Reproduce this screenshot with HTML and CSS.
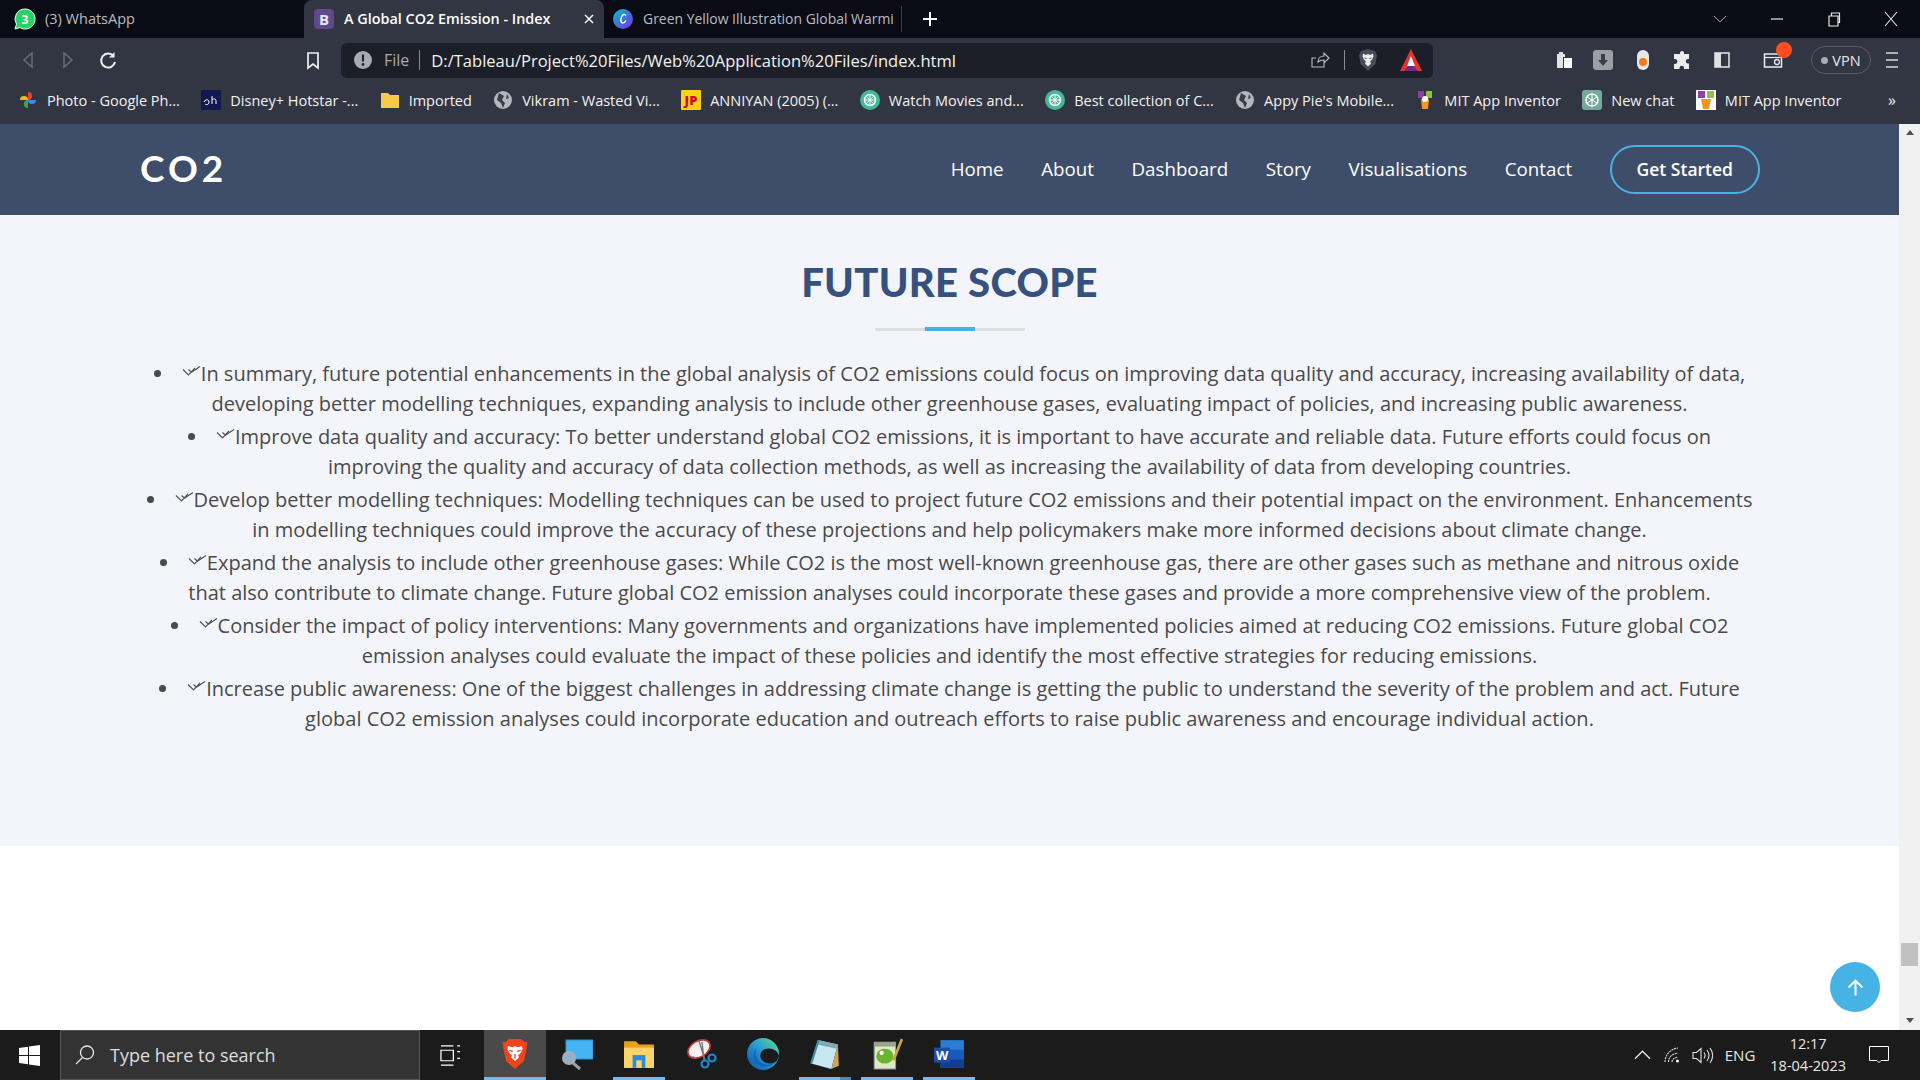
FILE: index.html
```html
<!DOCTYPE html>
<html lang="en">
<head>
<meta charset="utf-8">
<title>A Global CO2 Emission - Index</title>
<link rel="stylesheet" href="styles.css">
</head>
<body>
<div class="tabstrip">
  <div class="tab tab-one">
    <svg class="ticon ticon-wa" viewBox="0 0 22 22"><path d="M11 1a10 10 0 0 0-8.500 15.200L1 21l5-1.400A10 10 0 1 0 11 1z" fill="#25d366" stroke="#eafff2" stroke-width="1"/><text x="11" y="15.500" class="badge-num">3</text></svg>
    <span class="tab-label dim">(3) WhatsApp</span>
  </div>
  <div class="tab tab-active">
    <svg class="ticon" viewBox="0 0 20 20"><rect width="20" height="20" rx="4" fill="#5f4b8b"/><text x="10" y="15.500" class="b-letter">B</text></svg>
    <span class="tab-label strong">A Global CO2 Emission - Index</span>
    <svg class="tab-x" viewBox="0 0 12 12"><path d="M2 2l8 8M10 2l-8 8" stroke="#fff" stroke-width="1.500"/></svg>
  </div>
  <div class="tab tab-three">
    <svg class="ticon" viewBox="0 0 20 20"><defs><linearGradient id="canva" x1="0" y1="0" x2="1" y2="1"><stop offset="0" stop-color="#00c4cc"/><stop offset="1" stop-color="#7d2ae8"/></linearGradient></defs><circle cx="10" cy="10" r="10" fill="url(#canva)"/><path d="M13 6.500c-1-2-3.500-1-4.500 1.500s-1 6 1 6 3-1.500 3.500-2.500" fill="none" stroke="#fff" stroke-width="1.500"/></svg>
    <span class="tab-label dim tab-label-narrow">Green Yellow Illustration Global Warmi</span>
  </div>
  <svg class="plus" viewBox="0 0 16 16"><path d="M8 1v14M1 8h14" stroke="#fff" stroke-width="2"/></svg>
  <div class="win-controls">
    <svg class="win" viewBox="0 0 16 16"><path d="M2 5l6 6 6-6" fill="none" stroke="#9a9ca6" stroke-width="1"/></svg>
    <svg class="win" viewBox="0 0 16 16"><path d="M2 8h12" stroke="#e8e8e8" stroke-width="1.200"/></svg>
    <svg class="win" viewBox="0 0 16 16"><path d="M3 5h9v10H3zM5.500 5V2h8v9.500H12" fill="none" stroke="#e8e8e8" stroke-width="1.200"/></svg>
    <svg class="win" viewBox="0 0 16 16"><path d="M2 1l12 14M14 1L2 15" stroke="#e8e8e8" stroke-width="1.100"/></svg>
  </div>
</div>

<div class="toolbar">
  <div class="slot"><svg class="i20" viewBox="0 0 20 20"><path d="M14 3L6 10l8 7z" fill="none" stroke="#6a6d79" stroke-width="1.500"/></svg></div>
  <div class="slot"><svg class="i20" viewBox="0 0 20 20"><path d="M6 3l8 7-8 7z" fill="none" stroke="#6a6d79" stroke-width="1.500"/></svg></div>
  <div class="slot"><svg class="i20" viewBox="0 0 20 20"><path d="M15.500 6A7 7 0 1 0 17 12" fill="none" stroke="#f2f2f2" stroke-width="2"/><path d="M16.500 2v5.500H11z" fill="#f2f2f2"/></svg></div>
  <div class="slot slot-mark"><svg class="i20" viewBox="0 0 20 20"><path d="M5 3h10v15l-5-4-5 4z" fill="none" stroke="#f0f0f0" stroke-width="1.700"/></svg></div>
  <div class="address">
    <svg class="i20 addr-info" viewBox="0 0 20 20"><circle cx="10" cy="10" r="9" fill="#a9abb2"/><path d="M10 4.500v7" stroke="#22252e" stroke-width="2.200"/><circle cx="10" cy="14.500" r="1.400" fill="#22252e"/></svg>
    <span class="addr-file">File</span>
    <span class="addr-sep"></span>
    <span class="addr-url">D:/Tableau/Project%20Files/Web%20Application%20Files/index.html</span>
    <span class="addr-fill"></span>
    <svg class="i20" viewBox="0 0 20 20"><path d="M14 10v7H2V8h4M8 12c0-4 3-6 6-6V3l5 5-5 5v-3c-3 0-5 1-6 2z" fill="none" stroke="#b9bbc2" stroke-width="1.100"/></svg>
    <span class="addr-sep addr-sep2"></span>
    <svg class="i-brave" viewBox="0 0 20 24"><path d="M10 1l7 2 2 4-1.500 9L10 23 2.500 16 1 7l2-4z" fill="#4a4d58"/><path d="M10 6l2 1 3-1.500 .5 3-1.500 3-2 2 1 2-3 3-3-3 1-2-2-2-1.500-3 .5-3L8 7z" fill="#f1f1f1"/><path d="M6.500 10l2 .5M13.500 10l-2 .5" stroke="#4a4d58" stroke-width="1"/></svg>
    <svg class="i-bat" viewBox="0 0 24 24"><path d="M12 1L23 23H1z" fill="#e3342f"/><path d="M12 15l7 8H5z" fill="#662d91"/><path d="M12 8l4 10H8z" fill="#fff"/></svg>
  </div>
  <div class="tools">
    <div class="slot tool"><svg class="i20" viewBox="0 0 20 20"><path d="M3 4h2V2h4v2h2v3H9v11H3z" fill="#e4e4e4"/><path d="M10 8h8v10h-8z" fill="#fff"/></svg></div>
    <div class="slot tool"><svg class="i20" viewBox="0 0 20 20"><rect x="0" y="0" width="20" height="20" rx="3" fill="#9d9fa6"/><path d="M8 4h4v6h3l-5 6-5-6h3z" fill="#3d3f48"/></svg></div>
    <div class="slot tool"><svg class="i20" viewBox="0 0 20 20"><rect x="4" y="0" width="12" height="20" rx="6" fill="#e8e8e8"/><circle cx="10" cy="12" r="4" fill="#f47a1f"/></svg></div>
    <div class="slot tool"><svg class="i20" viewBox="0 0 20 20"><path d="M8 3a2 2 0 0 1 4 0v1h5v5h-1a2.200 2.200 0 0 0 0 4.500h1V19h-5v-1a2.200 2.200 0 0 0-4.500 0v1H2v-5h1a2.500 2.500 0 0 0 0-5H2V4h6z" fill="#ececec"/></svg></div>
    <div class="slot tool"><svg class="i20" viewBox="0 0 20 20"><rect x="3" y="3" width="14" height="14" fill="none" stroke="#e0e0e0" stroke-width="1.600"/><rect x="3" y="3" width="6" height="14" fill="#e0e0e0"/></svg></div>
    <div class="slot tool tool-wallet">
      <svg class="i20" viewBox="0 0 20 20"><path d="M1.500 4h17v13h-17z" fill="none" stroke="#ececec" stroke-width="1.500"/><path d="M1.500 7.500h17" stroke="#ececec" stroke-width="1.200"/><circle cx="14" cy="12" r="2.500" fill="none" stroke="#ececec" stroke-width="1.300"/></svg>
      <span class="dot-alert"></span>
    </div>
    <div class="vpn"><span class="vpn-dot"></span>VPN</div>
    <div class="slot menu"><svg class="i20" viewBox="0 0 20 20"><path d="M4 3h12M4 10h12M4 17h12" stroke="#d8d8d8" stroke-width="1.700"/></svg></div>
  </div>
</div>

<div class="bookmarks">
  <div class="bm"><svg class="bicon" viewBox="0 0 20 20"><path d="M10 10V2a4 4 0 0 1 0 8z" fill="#ea4335"/><path d="M10 10h8a4 4 0 0 1-8 0z" fill="#4285f4"/><path d="M10 10v8a4 4 0 0 1 0-8z" fill="#34a853"/><path d="M10 10H2a4 4 0 0 1 8 0z" fill="#fbbc04"/></svg><span>Photo - Google Ph...</span></div>
  <div class="bm"><svg class="bicon" viewBox="0 0 20 20"><rect width="20" height="20" fill="#10194d"/><path d="M3 12c1-3 5-3 5 0s-3 3-4 2M11 6v8M11 10c2-2 4-1 4 1v3" fill="none" stroke="#fff" stroke-width="1"/></svg><span>Disney+ Hotstar -...</span></div>
  <div class="bm"><svg class="bicon" viewBox="0 0 20 20"><path d="M1 3h7l2 2h9v13H1z" fill="#f7c948"/></svg><span>Imported</span></div>
  <div class="bm"><svg class="bicon" viewBox="0 0 20 20"><circle cx="10" cy="10" r="9" fill="#b4b6bc"/><path d="M6 3l5 3-2 4 3 3-2 5-2-5-4-3zM14 4l2 4-3 1z" fill="#3a3d49"/></svg><span>Vikram - Wasted Vi...</span></div>
  <div class="bm"><svg class="bicon" viewBox="0 0 20 20"><rect width="20" height="20" rx="1" fill="#fcd116"/><text x="10" y="15" class="jp">JP</text></svg><span>ANNIYAN (2005) (...</span></div>
  <div class="bm"><svg class="bicon" viewBox="0 0 20 20"><circle cx="10" cy="10" r="10" fill="#42b99a"/><circle cx="10" cy="10" r="5.500" fill="none" stroke="#fff" stroke-width="1.500"/><path d="M10 4v12M4 10h12M6 6l8 8M14 6l-8 8" stroke="#fff"/></svg><span>Watch Movies and...</span></div>
  <div class="bm"><svg class="bicon" viewBox="0 0 20 20"><circle cx="10" cy="10" r="10" fill="#42b99a"/><circle cx="10" cy="10" r="5.500" fill="none" stroke="#fff" stroke-width="1.500"/><path d="M10 4v12M4 10h12M6 6l8 8M14 6l-8 8" stroke="#fff"/></svg><span>Best collection of C...</span></div>
  <div class="bm"><svg class="bicon" viewBox="0 0 20 20"><circle cx="10" cy="10" r="9" fill="#b4b6bc"/><path d="M6 3l5 3-2 4 3 3-2 5-2-5-4-3zM14 4l2 4-3 1z" fill="#3a3d49"/></svg><span>Appy Pie's Mobile...</span></div>
  <div class="bm"><svg class="bicon" viewBox="0 0 20 20"><path d="M3 1h6v7H3z" fill="#8e3fa0"/><path d="M11 1h6v7h-6z" fill="#8cc63f"/><path d="M6 9h8l-1 10H7z" fill="#f7941d"/><circle cx="10" cy="9" r="3" fill="#fff"/></svg><span>MIT App Inventor</span></div>
  <div class="bm"><svg class="bicon" viewBox="0 0 20 20"><rect width="20" height="20" rx="3" fill="#74aa9c"/><circle cx="10" cy="10" r="6" fill="none" stroke="#fff" stroke-width="1.500"/><path d="M10 4v12M5 7l10 6M15 7L5 13" stroke="#fff"/></svg><span>New chat</span></div>
  <div class="bm"><svg class="bicon" viewBox="0 0 20 20"><rect width="20" height="20" fill="#fff"/><path d="M2 1h7v7H2z" fill="#8e3fa0"/><path d="M11 1h7v7h-7z" fill="#8cc63f"/><path d="M5 9h10l-2 10H7z" fill="#f7941d"/></svg><span>MIT App Inventor</span></div>
  <span class="bm-more">»</span>
</div>

<div class="viewport">
  <div class="page">
    <header class="site-header">
      <span class="logo">CO2</span>
      <nav class="site-nav">
        <a>Home</a><a>About</a><a>Dashboard</a><a>Story</a><a>Visualisations</a><a>Contact</a>
        <a class="cta">Get Started</a>
      </nav>
    </header>
    <section class="scope">
      <h2 class="scope-title">FUTURE SCOPE</h2>
      <div class="scope-rule"><span></span></div>
      <ul class="scope-list">
        <li><svg class="dbl" viewBox="0 0 18 10"><path d="M.5 3.500L6 9 12.500 1.800M6 3.500L9 6.300 17.500.5" fill="none" stroke="#555" stroke-width="1.200"/></svg>In summary, future potential enhancements in the global analysis of CO2 emissions could focus on improving data quality and accuracy, increasing availability of data, developing better modelling techniques, expanding analysis to include other greenhouse gases, evaluating impact of policies, and increasing public awareness.</li>
        <li><svg class="dbl" viewBox="0 0 18 10"><path d="M.5 3.500L6 9 12.500 1.800M6 3.500L9 6.300 17.500.5" fill="none" stroke="#555" stroke-width="1.200"/></svg>Improve data quality and accuracy: To better understand global CO2 emissions, it is important to have accurate and reliable data. Future efforts could focus on improving the quality and accuracy of data collection methods, as well as increasing the availability of data from developing countries.</li>
        <li><svg class="dbl" viewBox="0 0 18 10"><path d="M.5 3.500L6 9 12.500 1.800M6 3.500L9 6.300 17.500.5" fill="none" stroke="#555" stroke-width="1.200"/></svg>Develop better modelling techniques: Modelling techniques can be used to project future CO2 emissions and their potential impact on the environment. Enhancements in modelling techniques could improve the accuracy of these projections and help policymakers make more informed decisions about climate change.</li>
        <li><svg class="dbl" viewBox="0 0 18 10"><path d="M.5 3.500L6 9 12.500 1.800M6 3.500L9 6.300 17.500.5" fill="none" stroke="#555" stroke-width="1.200"/></svg>Expand the analysis to include other greenhouse gases: While CO2 is the most well-known greenhouse gas, there are other gases such as methane and nitrous oxide that also contribute to climate change. Future global CO2 emission analyses could incorporate these gases and provide a more comprehensive view of the problem.</li>
        <li><svg class="dbl" viewBox="0 0 18 10"><path d="M.5 3.500L6 9 12.500 1.800M6 3.500L9 6.300 17.500.5" fill="none" stroke="#555" stroke-width="1.200"/></svg>Consider the impact of policy interventions: Many governments and organizations have implemented policies aimed at reducing CO2 emissions. Future global CO2 emission analyses could evaluate the impact of these policies and identify the most effective strategies for reducing emissions.</li>
        <li><svg class="dbl" viewBox="0 0 18 10"><path d="M.5 3.500L6 9 12.500 1.800M6 3.500L9 6.300 17.500.5" fill="none" stroke="#555" stroke-width="1.200"/></svg>Increase public awareness: One of the biggest challenges in addressing climate change is getting the public to understand the severity of the problem and act. Future global CO2 emission analyses could incorporate education and outreach efforts to raise public awareness and encourage individual action.</li>
      </ul>
    </section>
    <a class="to-top"><svg viewBox="0 0 20 20"><path d="M10 17V4M4 10l6-6 6 6" fill="none" stroke="#fff" stroke-width="1.800"/></svg></a>
  </div>
  <div class="scrollbar">
    <span class="arrow-up"></span>
    <span class="thumb"></span>
    <span class="arrow-down"></span>
  </div>
</div>

<div class="taskbar">
  <svg class="start" viewBox="0 0 21 21"><path d="M0 3l9-1.300V10H0zM10 1.500L21 0v10H10zM0 11h9v8.300L0 18zM10 11h11v10l-11-1.500z" fill="#fff"/></svg>
  <div class="searchbox">
    <svg class="search-i" viewBox="0 0 22 22"><circle cx="13" cy="8.500" r="6.500" fill="none" stroke="#e8e8e8" stroke-width="1.300"/><path d="M8.500 13.500L2 20" stroke="#e8e8e8" stroke-width="1.300"/></svg>
    <span>Type here to search</span>
  </div>
  <div class="taskview"><svg viewBox="0 0 22 22"><path d="M1 1h13M1 21h13M1 5.500h13v11H1zM18 1h3M18 7h3M18 14h3" fill="none" stroke="#fff" stroke-width="1.300"/></svg></div>
  <div class="apps">
    <div class="app app-on"><svg viewBox="0 0 30 36"><path d="M8 1h14l3 3 4 1-1 7-3 14-10 9-10-9L2 12 1 5l4-1z" fill="#f1431c"/><path d="M15 9l3 1.500 5-1.500 .5 4-3 5-2 1 1 3-4.500 4-4.500-4 1-3-2-1-3-5 .5-4 5 1.500z" fill="#fff"/><path d="M8.500 14l4 1M21.500 14l-4 1M15 18v5" stroke="#f1431c" stroke-width="1.500"/></svg></div>
    <div class="app"><svg viewBox="0 0 32 30"><rect x="5" y="1" width="27" height="19" fill="#45b4f5" stroke="#2f8fd0" stroke-width="1"/><circle cx="8" cy="19" r="6" fill="#8fb4c9" stroke="#a8b0b6" stroke-width="2"/><path d="M12 24l7 6" stroke="#9aa0a6" stroke-width="3"/></svg></div>
    <div class="app"><svg viewBox="0 0 30 28"><path d="M1 2h11l3 3h14v22H1z" fill="#e8a21a"/><path d="M1 8h28v19H1z" fill="#ffd56b"/><path d="M9 15h12v12H9z" fill="#2a8fd8"/><path d="M12.500 20h5v7h-5z" fill="#ffd56b"/></svg></div>
    <div class="app"><svg viewBox="0 0 30 32"><ellipse cx="13" cy="11" rx="12" ry="8" fill="#f2f2f2" stroke="#c0363a" stroke-width="1.600" transform="rotate(-30 13 11)"/><path d="M5 18l6 2-4-2z" fill="#777"/><path d="M13 3l6 19M16 4l2 18" stroke="#777" stroke-width="1.400"/><circle cx="19" cy="26" r="3.500" fill="none" stroke="#1e88d2" stroke-width="2.200"/><circle cx="26" cy="20" r="3.500" fill="none" stroke="#1e88d2" stroke-width="2.200"/></svg></div>
    <div class="app"><svg viewBox="0 0 32 32"><defs><linearGradient id="edge" x1="0" y1="1" x2="1" y2="0"><stop offset="0" stop-color="#0b4f9e"/><stop offset=".55" stop-color="#2a9ed8"/><stop offset="1" stop-color="#62de7e"/></linearGradient></defs><circle cx="16" cy="16" r="16" fill="url(#edge)"/><path d="M32 18C31 12 24 9 18 11c-5 2-6 8-3 11 3 4 10 5 15 1l2-5z" fill="#1b1b1b"/><path d="M30 22c-4 6-12 8-18 5-6-3-7-11-3-16-1 5 0 11 5 14s11 2 16-3z" fill="#0f63b8"/></svg></div>
    <div class="app app-double"><svg viewBox="0 0 30 30"><path d="M9 2l18 4-6 23-19-5z" fill="#c6e7ef"/><path d="M9 2l18 4-1 4-18-4z" fill="#7fa8b6"/><path d="M27 6l1 20-7 3z" fill="#caa45b"/><path d="M2 24L9 2" stroke="#3f8ea5" stroke-width="2"/></svg></div>
    <div class="app"><svg viewBox="0 0 30 30"><path d="M3 4h20v25H3z" fill="#dfe8c4" stroke="#999" stroke-width="1"/><path d="M3 4h20v4H3z" fill="#9aa38b"/><ellipse cx="13" cy="17" rx="8" ry="7" fill="#6ab42e"/><circle cx="10" cy="14" r="2" fill="#fff"/><path d="M29 1l-8 20" stroke="#d1a23e" stroke-width="2.500"/></svg></div>
    <div class="app"><svg viewBox="0 0 30 28"><path d="M7 1h22v26H7z" fill="#2b7cd3"/><path d="M7 10h22v9H7z" fill="#185abd"/><path d="M7 19h22v8H7z" fill="#103f91"/><path d="M1 8h15v14H1z" fill="#1d4fa8"/><text x="8.500" y="19.500" class="w-letter">W</text></svg></div>
  </div>
  <span class="task-fill"></span>
  <div class="tray">
    <svg class="tr-chev" viewBox="0 0 18 10"><path d="M1 9l8-8 8 8" fill="none" stroke="#eee" stroke-width="1.300"/></svg>
    <svg class="tr-wifi" viewBox="0 0 16 16"><path d="M1 15C1 8 6 2 14 1M4.500 15c0-4.500 3-8 9.500-9M8 15c0-2.500 2-4 6-5" fill="none" stroke="#ddd" stroke-width="1.100" stroke-dasharray="2 .8"/><circle cx="13.500" cy="14" r="1.500" fill="#fff"/></svg>
    <svg class="tr-vol" viewBox="0 0 21 17"><path d="M1 5.500h3.500L9 1.500v14l-4.500-4H1zM12 5.500c1.500 2 1.500 4 0 6M15 3c2.500 3.500 2.500 7.500 0 11M18 1c3.500 5 3.500 10 0 15" fill="none" stroke="#e2e2e2" stroke-width="1.100"/></svg>
    <span class="tr-lang">ENG</span>
    <div class="tr-clock"><span>12:17</span><span>18-04-2023</span></div>
    <svg class="tr-note" viewBox="0 0 20 20"><path d="M.5 1.500h19v14H12l-2 2-2-2H.5z" fill="none" stroke="#fff" stroke-width="1"/></svg>
  </div>
</div>
</body>
</html>
```
FILE: styles.css
```css
* { box-sizing: border-box; }
html, body { margin: 0; padding: 0; }
body {
  width: 1920px;
  height: 1080px;
  overflow: hidden;
  display: flex;
  flex-direction: column;
  background: #fff;
  font-family: "Open Sans", "Liberation Sans", sans-serif;
}
svg { display: block; flex: none; }

/* tab strip */
.tabstrip {
  height: 38px;
  flex: none;
  display: flex;
  align-items: stretch;
  background: #0a0b14;
  color: #fff;
  font-size: 14.500px;
}
.tab { display: flex; align-items: center; }
.tab-one { width: 304px; padding-left: 14px; }
.tab-active {
  width: 300px;
  padding-left: 10px;
  background: #323542;
  border-radius: 8px 8px 0 0;
}
.tab-three { width: 298px; padding-left: 9px; }
.tab-three::after { content: ""; width: 1px; height: 26px; margin-left: auto; background: #3a3c47; }
.ticon { width: 20px; height: 20px; margin-right: 10px; }
.ticon-wa { width: 22px; height: 22px; margin-right: 9px; }
.tab-label { white-space: nowrap; position: relative; top: -1px; }
.tab-label-narrow { font-size: 13.950px; }
.dim { color: #b9bbc2; }
.strong { color: #fff; font-weight: 600; font-size: 14.400px; }
.tab-x { width: 12px; height: 12px; margin-left: auto; margin-right: 9px; }
.plus { width: 16px; height: 16px; align-self: center; margin-left: 20px; }
.win-controls { margin-left: auto; display: flex; align-items: center; gap: 41px; padding-right: 21px; }
.win { width: 16px; height: 16px; }
.badge-num { font: 700 12px "Open Sans", sans-serif; fill: #fff; text-anchor: middle; }
.b-letter { font: 700 15px "Open Sans", sans-serif; fill: #e8e4f2; text-anchor: middle; }
.jp { font: 800 13px "Open Sans", sans-serif; fill: #c8102e; text-anchor: middle; }
.w-letter { font: 700 12px "Open Sans", sans-serif; fill: #fff; text-anchor: middle; }

/* toolbar */
.toolbar {
  height: 44px;
  flex: none;
  display: flex;
  align-items: center;
  padding-left: 8px;
  background: #323542;
}
.slot { width: 40px; height: 35px; display: flex; align-items: center; justify-content: center; position: relative; }
.slot-mark { margin-left: 165px; margin-right: 8px; }
.i20 { width: 20px; height: 20px; }
.address {
  width: 1092px;
  height: 35px;
  display: flex;
  align-items: center;
  padding: 0 10px 0 12px;
  border-radius: 6px;
  background: #1c1f27;
  font-size: 16px;
}
.addr-file { color: #a9abb2; margin-left: 11px; }
.addr-sep { width: 1px; height: 20px; background: #8a8c94; margin: 0 11px 0 10px; }
.addr-url { color: #f2f2f2; white-space: nowrap; font-size: 16.550px; }
.addr-fill { flex: 1; }
.addr-sep2 { margin: 0 0 0 14px; }
.i-brave { width: 20px; height: 24px; margin-left: 13px; }
.i-bat { width: 24px; height: 24px; margin-left: 21px; }
.tools { display: flex; align-items: center; margin-left: 111px; }
.tool { width: 39.500px; }
.tool-wallet { margin-left: 12px; }
.dot-alert {
  position: absolute;
  top: -1px;
  right: 1px;
  width: 16px;
  height: 16px;
  border-radius: 50%;
  background: #ff4f22;
}
.vpn {
  width: 60px;
  height: 28px;
  margin-left: 18px;
  display: flex;
  align-items: center;
  justify-content: center;
  gap: 4px;
  border: 1px solid #5a5c68;
  border-radius: 14px;
  color: #e8e8e8;
  font-size: 14.500px;
}
.vpn-dot { width: 7px; height: 7px; border-radius: 50%; background: #a9abb2; }
.menu { margin-left: 1px; }

/* bookmarks */
.bookmarks {
  height: 42px;
  padding: 0 0 6px 18px;
  flex: none;
  display: flex;
  align-items: center;
  gap: 21.400px;
  background: #323542;
  color: #f2f2f2;
  font-size: 14.500px;
}
.bm { display: flex; align-items: center; gap: 9px; white-space: nowrap; }
.bicon { width: 20px; height: 20px; }
.bm-more { margin-left: auto; margin-right: 24px; font-size: 16px; }

/* viewport */
.viewport { flex: 1; min-height: 0; display: flex; }
.page { flex: 1; min-width: 0; position: relative; }
.scrollbar {
  width: 21px;
  flex: none;
  background: #f1f1f1;
  display: flex;
  flex-direction: column;
  align-items: center;
}
.arrow-up, .arrow-down { width: 0; height: 0; border-left: 4px solid transparent; border-right: 4px solid transparent; }
.arrow-up { border-bottom: 5px solid #505050; margin-top: 6px; }
.arrow-down { border-top: 5px solid #505050; margin-bottom: 7px; }
.thumb { width: 17px; height: 23px; background: #c1c1c1; margin: auto 0 52px; }

.site-header {
  height: 91px;
  display: flex;
  align-items: center;
  justify-content: space-between;
  padding: 0 139px 0 140px;
  background: #3e4e6a;
}
.logo { font: 700 37px "Lato", sans-serif; color: #fff; letter-spacing: 4px; position: relative; top: -2px; }
.site-nav { display: flex; align-items: center; gap: 37.500px; font-size: 18.750px; color: #fff; }
.site-nav a { position: relative; top: -1px; }
.site-nav .cta { top: 0; }
.cta {
  padding: 10px 25px;
  border: 2px solid #47b2e4;
  border-radius: 25px;
  font-size: 17.500px;
  font-weight: 600;
  line-height: 25px;
}

.scope { height: 631px; padding-top: 43px; background: #f3f5fa; }
.scope-title {
  margin: 0;
  text-align: center;
  font: 900 40px/48px "Lato", sans-serif;
  letter-spacing: .3px;
  color: #37517e;
}
.scope-rule { width: 150px; height: 3px; margin: 22px auto 0; background: #ddd; position: relative; }
.scope-rule span { position: absolute; left: 50px; top: -1px; width: 50px; height: 4px; background: #47b2e4; }
.scope-list {
  width: 1620px;
  margin: 28px auto 0;
  padding: 0;
  list-style-position: inside;
  text-align: center;
  font-size: 20px;
  line-height: 30px;
  color: #4a4a4a;
}
.scope-list li { margin-bottom: 3px; }
.dbl { display: inline-block; width: 19px; height: 10px; vertical-align: 5px; }

.to-top {
  position: absolute;
  right: 19px;
  bottom: 18px;
  width: 50px;
  height: 50px;
  border-radius: 50%;
  background: #47b2e4;
  display: flex;
  align-items: center;
  justify-content: center;
}
.to-top svg { width: 23px; height: 23px; }

/* taskbar */
.taskbar {
  height: 50px;
  flex: none;
  display: flex;
  align-items: stretch;
  background: #1b1b1b;
  color: #eee;
}
.start { width: 21px; height: 21px; align-self: center; margin: 0 20px 0 19px; }
.searchbox {
  width: 360px;
  display: flex;
  align-items: center;
  gap: 14px;
  padding-left: 13px;
  background: #333;
  border: 1px solid #555;
  color: #ddd;
  font-size: 18px;
}
.search-i { width: 22px; height: 22px; }
.taskview { width: 64px; display: flex; align-items: center; justify-content: center; }
.taskview svg { width: 21px; height: 21px; margin-left: -4px; }
.apps { display: flex; }
.app {
  width: 52px;
  margin: 0 5px;
  display: flex;
  align-items: center;
  justify-content: center;
  border-bottom: 3px solid #76b9ed;
}
.app svg { width: 32px; height: 32px; }
.app:nth-child(2), .app:nth-child(4), .app:nth-child(5) { border-bottom-color: transparent; }
.app-on { width: 62px; margin: 0; background: #4a4a4a; }
.app-double { border-image: linear-gradient(90deg, #76b9ed 78%, #4f86b5 78%) 1; }
.task-fill { flex: 1; }
.tray { display: flex; align-items: center; padding-right: 31px; font-size: 15px; color: #e6e6e6; }
.tr-chev { width: 17px; height: 10px; margin-right: 13px; }
.tr-wifi { width: 16px; height: 16px; margin-right: 12px; }
.tr-vol { width: 21px; height: 17px; margin-right: 12px; }
.tr-lang { margin-right: 15px; }
.tr-clock { display: flex; flex-direction: column; align-items: center; font-size: 14.500px; line-height: 22px; margin-right: 23px; }
.tr-note { width: 20px; height: 20px; }
```
